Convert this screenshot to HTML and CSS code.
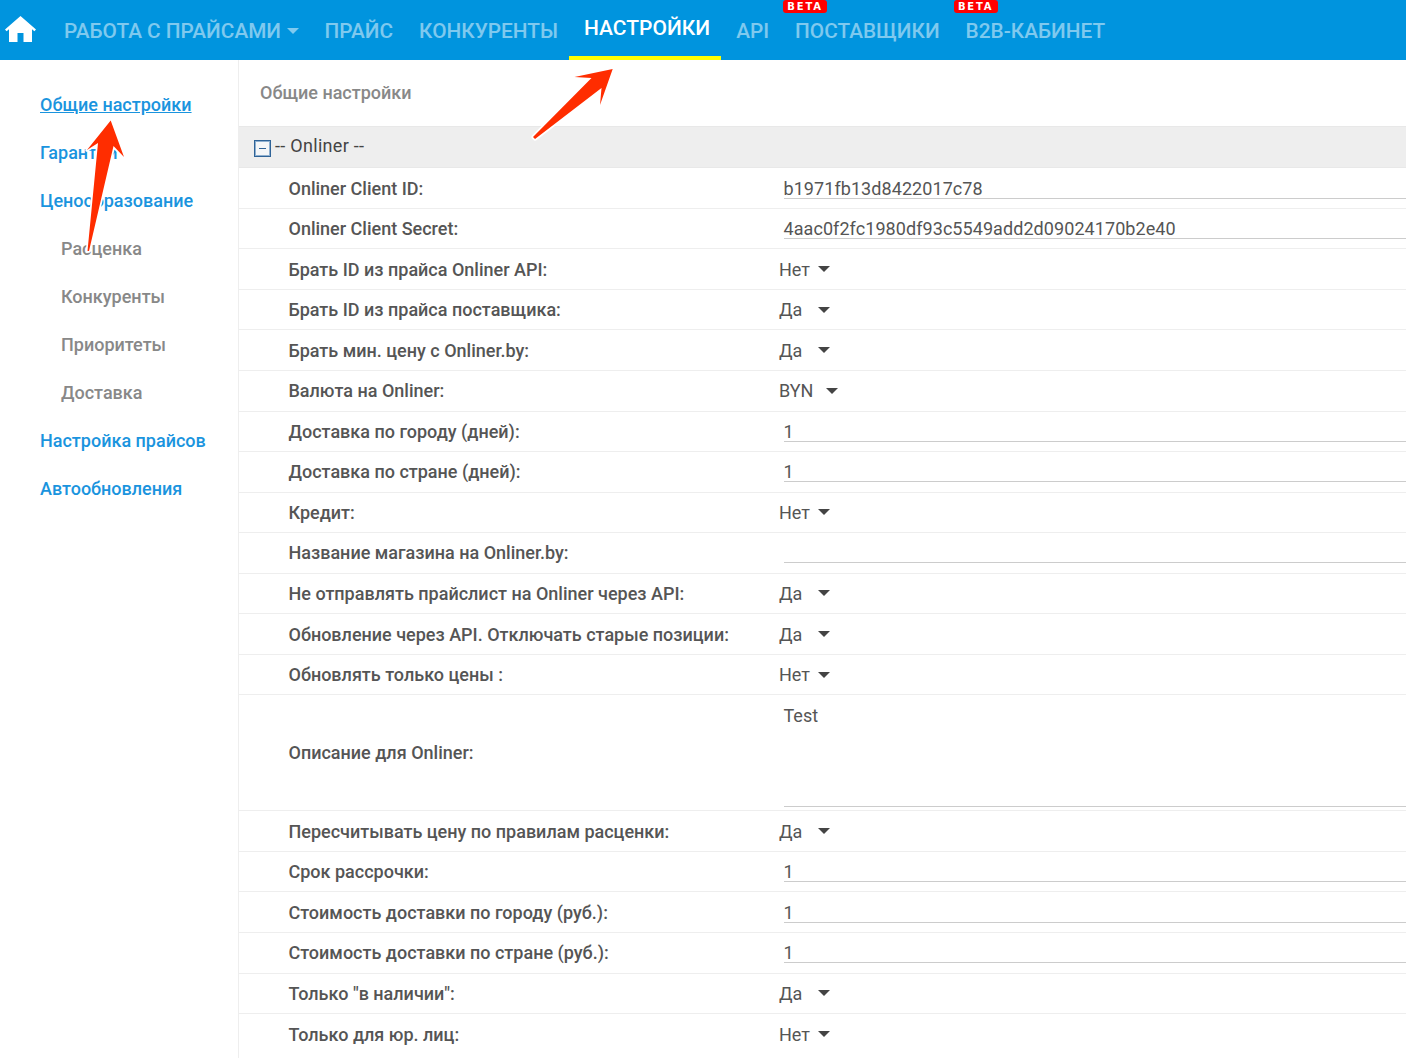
FILE: index.html
```html
<!DOCTYPE html>
<html lang="ru">
<head>
    <meta charset="UTF-8">
    <title>Общие настройки</title>
    <link rel="stylesheet" href="styles.css">
</head>
<body>
    <div class="topbar">
        <a class="home" href="#">
            <svg width="31" height="26" viewBox="0 0 31 26"><path fill="#fff" d="M15.5 0 L31 13.5 L29.4 15.2 L27 13.2 V26 H18.5 V17 H12.5 V26 H4 V13.2 L1.6 15.2 L0 13.5 Z"/></svg>
        </a>
        <a class="nav-item" href="#">Работа с прайсами<span class="caret"></span></a>
        <a class="nav-item" href="#">Прайс</a>
        <a class="nav-item" href="#">Конкуренты</a>
        <a class="nav-item active" href="#">Настройки</a>
        <a class="nav-item" href="#">API</a>
        <a class="nav-item" href="#"><span class="beta">BETA</span>Поставщики</a>
        <a class="nav-item" href="#"><span class="beta">BETA</span>B2B-кабинет</a>
    </div>

    <div class="main">
        <div class="sidebar">
            <a class="side-link current" href="#">Общие настройки</a>
            <a class="side-link" href="#">Гарантии</a>
            <a class="side-link" href="#">Ценообразование</a>
            <a class="side-link sub" href="#">Расценка</a>
            <a class="side-link sub" href="#">Конкуренты</a>
            <a class="side-link sub" href="#">Приоритеты</a>
            <a class="side-link sub" href="#">Доставка</a>
            <a class="side-link" href="#">Настройка прайсов</a>
            <a class="side-link" href="#">Автообновления</a>
        </div>

        <div class="content">
            <div class="page-title">Общие настройки</div>
            <div class="group-head"><span class="minus"></span>-- Onliner --</div>

            <div class="row"><div class="label">Onliner Client ID:</div><div class="input">b1971fb13d8422017c78</div></div>
            <div class="row"><div class="label">Onliner Client Secret:</div><div class="input">4aac0f2fc1980df93c5549add2d09024170b2e40</div></div>
            <div class="row"><div class="label">Брать ID из прайса Onliner API:</div><div class="select">Нет<span class="arrow"></span></div></div>
            <div class="row"><div class="label">Брать ID из прайса поставщика:</div><div class="select">Да<span class="arrow wide"></span></div></div>
            <div class="row"><div class="label">Брать мин. цену с Onliner.by:</div><div class="select">Да<span class="arrow wide"></span></div></div>
            <div class="row"><div class="label">Валюта на Onliner:</div><div class="select">BYN<span class="arrow mid"></span></div></div>
            <div class="row"><div class="label">Доставка по городу (дней):</div><div class="input">1</div></div>
            <div class="row"><div class="label">Доставка по стране (дней):</div><div class="input">1</div></div>
            <div class="row"><div class="label">Кредит:</div><div class="select">Нет<span class="arrow"></span></div></div>
            <div class="row"><div class="label">Название магазина на Onliner.by:</div><div class="input"></div></div>
            <div class="row"><div class="label">Не отправлять прайслист на Onliner через API:</div><div class="select">Да<span class="arrow wide"></span></div></div>
            <div class="row"><div class="label">Обновление через API. Отключать старые позиции:</div><div class="select">Да<span class="arrow wide"></span></div></div>
            <div class="row"><div class="label">Обновлять только цены :</div><div class="select">Нет<span class="arrow"></span></div></div>
            <div class="row tall"><div class="label">Описание для Onliner:</div><div class="textarea">Test</div></div>
            <div class="row"><div class="label">Пересчитывать цену по правилам расценки:</div><div class="select">Да<span class="arrow wide"></span></div></div>
            <div class="row"><div class="label">Срок рассрочки:</div><div class="input">1</div></div>
            <div class="row"><div class="label">Стоимость доставки по городу (руб.):</div><div class="input">1</div></div>
            <div class="row"><div class="label">Стоимость доставки по стране (руб.):</div><div class="input">1</div></div>
            <div class="row"><div class="label">Только "в наличии":</div><div class="select">Да<span class="arrow wide"></span></div></div>
            <div class="row last"><div class="label">Только для юр. лиц:</div><div class="select">Нет<span class="arrow"></span></div></div>
        </div>
    </div>

    <!-- red arrows drawn over the screenshot -->
    <svg class="marks" width="1406" height="1058" viewBox="0 0 1406 1058">
        <path class="mark" d="M110.7 120.5 L124 157 L113.5 146 L89 251 L87.5 251 L98 143 L87 150 Z"/>
        <path class="mark" d="M612.7 69 L600 105 L601.5 88 L535 139 L533 137 L591.5 78 L574.5 77 Z"/>
    </svg>
</body>
</html>
```
FILE: styles.css
```css
* {
    box-sizing: border-box;
}
html, body {
    margin: 0;
    height: 1058px;
    overflow: hidden;
}
body {
    font: 18px Roboto, "Liberation Sans", sans-serif;
    color: #444;
    background: #fff;
}
a {
    text-decoration: none;
}

.topbar {
    display: flex;
    height: 60px;
    background: #0094de;
}
.home {
    display: flex;
    align-items: center;
    width: 49px;
    padding: 0 0 2px 5px;
}
.nav-item {
    position: relative;
    display: flex;
    align-items: center;
    height: 60px;
    padding: 1px 11px 0 15px;
    font-size: 20.8px;
    font-weight: 500;
    text-transform: uppercase;
    color: rgba(255, 255, 255, .5);
}
.nav-item.active {
    padding: 0 11px 0 15px;
    border-bottom: 4px solid #ffff00;
    font-size: 21px;
    color: #fff;
}
.caret {
    display: inline-block;
    margin-left: 5.5px;
    border-top: 6px solid rgba(255, 255, 255, .5);
    border-left: 6px solid transparent;
    border-right: 6px solid transparent;
}
.beta {
    position: absolute;
    top: 0;
    left: 3px;
    width: 44px;
    height: 13px;
    border-radius: 3px;
    background: #f00;
    color: #fff;
    font: 700 10px/13px "DejaVu Sans", sans-serif;
    letter-spacing: 1.8px;
    text-align: center;
}

.main {
    display: flex;
    height: 998px;
}
.sidebar {
    flex: none;
    width: 239px;
    padding: 21px 0 0 40px;
    border-right: 1px solid #eee;
}
.side-link {
    display: block;
    height: 48px;
    line-height: 48px;
    font-weight: 500;
    color: #1a94de;
}
.side-link.current {
    text-decoration: underline;
}
.side-link.sub {
    padding-left: 21px;
    color: #888;
}

.content {
    flex: 1;
    min-width: 0;
}
.page-title {
    height: 66px;
    padding: 22px 0 0 21px;
    font-weight: 500;
    color: #888;
}
.group-head {
    display: flex;
    align-items: center;
    height: 42.25px;
    padding: 0 0 3px 15px;
    background: #eee;
    border-top: 1px solid #e8e8e8;
    border-bottom: 1px solid #e8e8e8;
    letter-spacing: .3px;
    font-variant-ligatures: none;
}
.minus {
    position: relative;
    width: 17px;
    height: 17px;
    margin: 5px 4px 0 0;
    border: 1px solid #2f6397;
    box-shadow: inset 0 0 0 1px #8fb0d0;
    background: #f4f6f8;
}
.minus::after {
    content: "";
    position: absolute;
    left: 4px;
    right: 4px;
    top: 7px;
    height: 1.5px;
    background: #2f6397;
}

.row {
    display: flex;
    align-items: center;
    height: 40.56px;
    padding-left: 49.5px;
    border-bottom: 1px solid #eee;
}
.row.last {
    border-bottom: 0;
}
.row.tall {
    height: 116px;
}
.label {
    flex: none;
    width: 490.5px;
    font-weight: 500;
    color: #555;
}
.input {
    flex: 1;
    height: 21px;
    margin: 0 0 0 4.5px;
    border-bottom: 1px solid #ccc;
    line-height: 21px;
    letter-spacing: .07px;
    color: #555;
}
.select {
    display: flex;
    align-items: center;
    color: #555;
}
.arrow {
    margin-left: 8.5px;
    border-top: 6px solid #444;
    border-left: 6.5px solid transparent;
    border-right: 6.5px solid transparent;
}
.arrow.wide {
    margin-left: 16px;
}
.arrow.mid {
    margin-left: 13px;
}
.textarea {
    flex: 1;
    align-self: stretch;
    margin: 0 0 3px 4.5px;
    padding-top: 10px;
    border-bottom: 1px solid #ccc;
    color: #555;
}

.marks {
    position: absolute;
    top: 0;
    left: 0;
    pointer-events: none;
}
.mark {
    fill: #ff2d00;
    stroke: #fff;
    stroke-width: 3.5;
    paint-order: stroke;
    stroke-linejoin: round;
}
```
